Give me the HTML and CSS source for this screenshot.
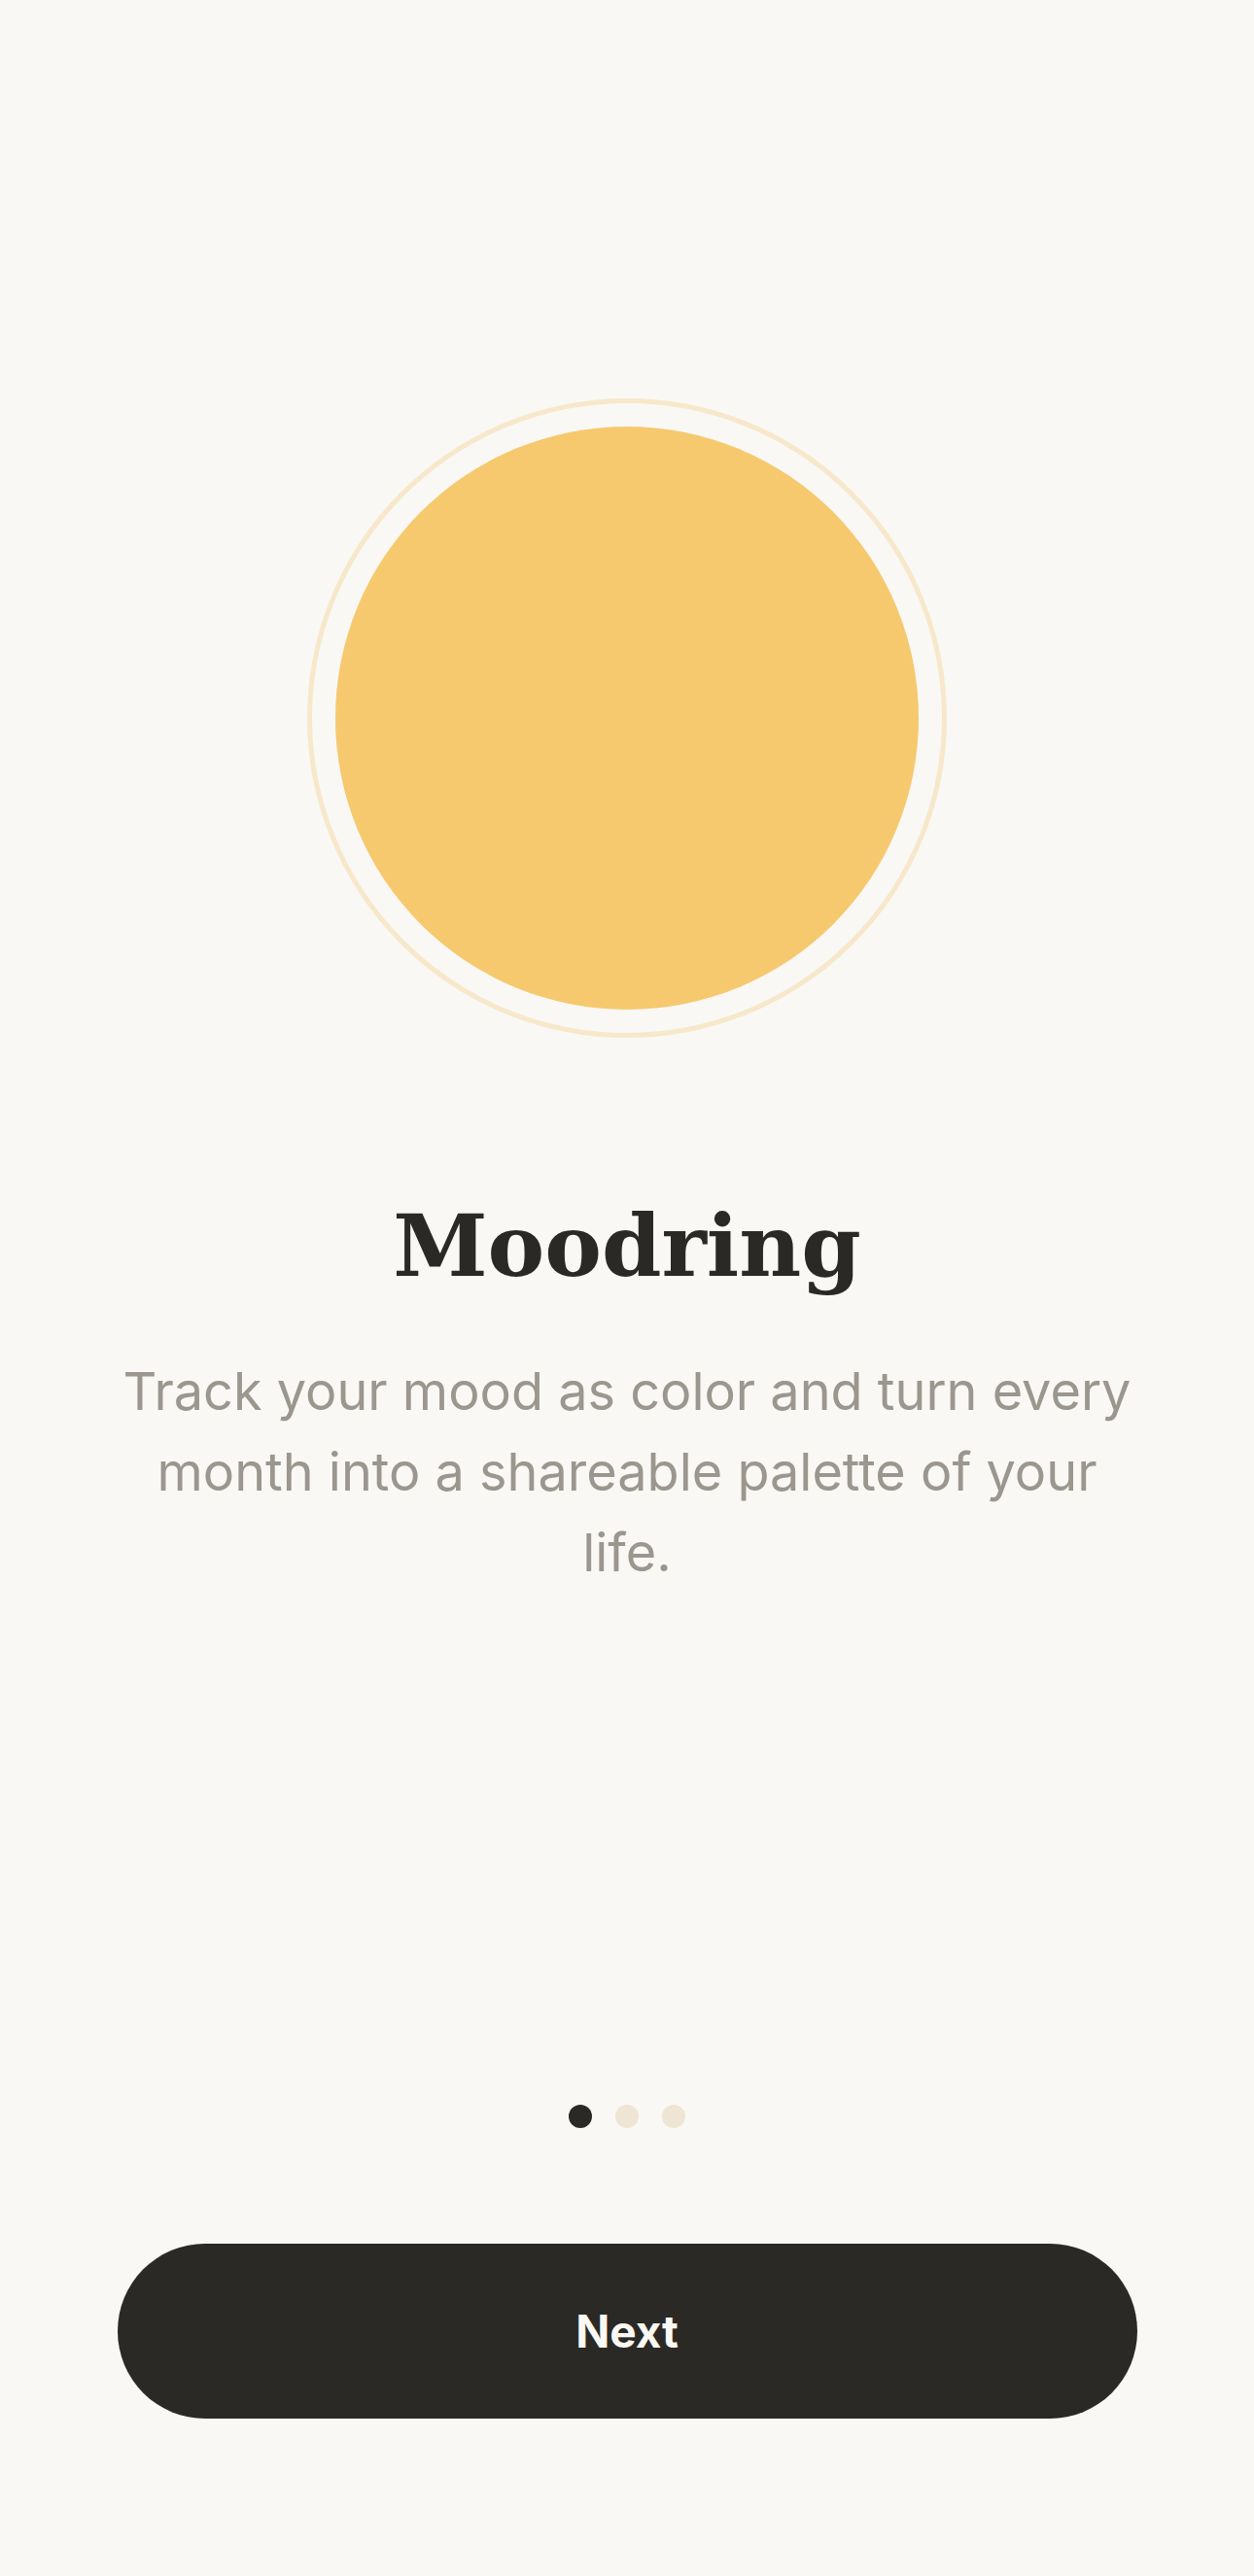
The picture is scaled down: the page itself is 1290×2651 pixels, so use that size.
FILE: index.html
```html
<!DOCTYPE html>
<html>
<head>
	<title>Moodring - Welcome</title>
	<link rel="stylesheet" href="styles.css">
</head>
<body class="page">
	<div class="screen">
		<div class="hero">
			<div class="ring">
				<div class="orb"></div>
			</div>
		</div>
		<h1 class="title">Moodring</h1>
		<p class="intro">Track your mood as color and turn every month into a shareable palette of your life.</p>
		<div class="dots">
			<span class="dot active"></span>
			<span class="dot"></span>
			<span class="dot"></span>
		</div>
		<button type="button" class="nextButton">Next</button>
	</div>
</body>
</html>
```

FILE: styles.css
```css
.page{
	margin:0;
	background:#f9f8f4;
}
.screen{
	display:flex;
	flex-direction:column;
	align-items:center;
	min-height:2651px;
	padding:0 120px;
	box-sizing:border-box;
}
.hero{
	margin-top:410px;
}
.ring{
	width:600px;
	height:600px;
	padding:24px;
	border:5px solid #f7e8cb;
	border-radius:50%;
}
.orb{
	width:600px;
	height:600px;
	border-radius:50%;
	background:#f6c96f;
}
.title{
	margin:162px 0 0;
	font-family:"DejaVu Serif", "Liberation Serif", serif;
	font-weight:bold;
	font-size:88px;
	line-height:1.2;
	color:#2a2925;
}
.intro{
	margin:54px 0 0;
	font-family:Inter, "Noto Sans", sans-serif;
	font-size:54px;
	line-height:83px;
	text-align:center;
	color:#9b968e;
}
.dots{
	display:flex;
	gap:24px;
	margin-top:527px;
}
.dot{
	width:24px;
	height:24px;
	border-radius:50%;
	background:#efe5d4;
}
.dot.active{
	background:#2a2925;
}
.nextButton{
	margin-top:119px;
	width:1049px;
	height:180px;
	border:none;
	border-radius:90px;
	background:#2a2925;
	color:#faf8f3;
	font-family:Inter, "Noto Sans", sans-serif;
	font-weight:bold;
	font-size:46px;
}
```
